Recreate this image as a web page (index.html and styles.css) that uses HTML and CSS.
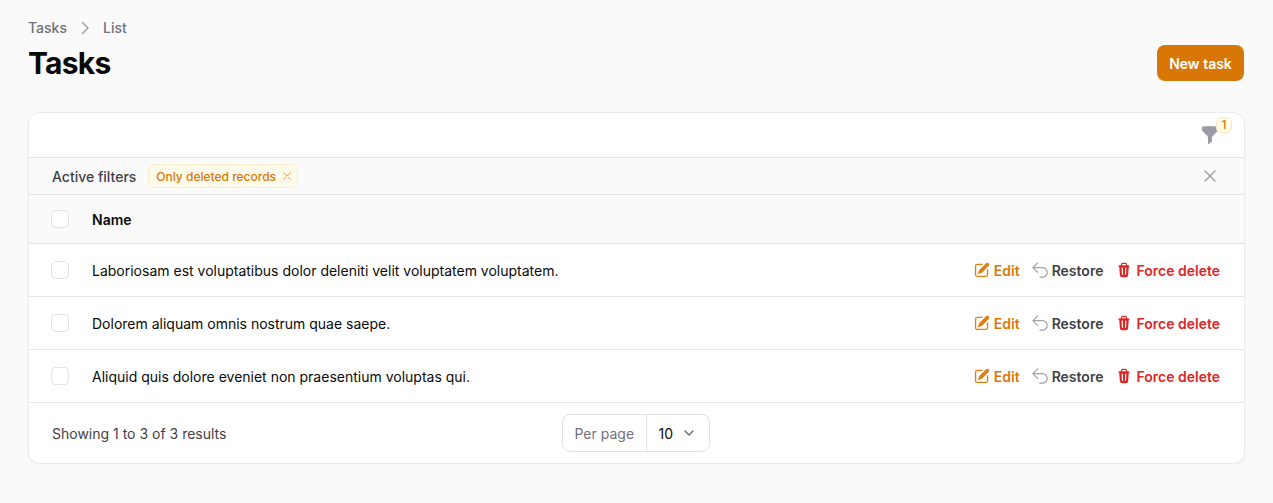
FILE: index.html
```html
<!DOCTYPE html>
<html lang="en">
<head>
<meta charset="utf-8">
<title>Tasks</title>
<link rel="stylesheet" href="styles.css">
</head>
<body>
<main class="page">
  <header class="page-head">
    <div>
      <nav class="crumbs">
        <span>Tasks</span>
        <svg class="crumb-sep" viewBox="0 0 20 20" fill="none" stroke="currentColor" stroke-width="1.5" stroke-linecap="round" stroke-linejoin="round"><path d="M7.5 4.5 13 10l-5.5 5.5"/></svg>
        <span>List</span>
      </nav>
      <h1 class="title">Tasks</h1>
    </div>
    <button class="new-btn">New task</button>
  </header>

  <section class="card">
    <div class="toolbar">
      <div class="filter-trigger">
        <svg class="funnel" viewBox="0 0 20 20" fill="currentColor"><path d="M2.628 1.601C5.028 1.206 7.49 1 10 1s4.973.206 7.372.601a.75.75 0 01.628.74v2.288a2.25 2.25 0 01-.659 1.59l-4.682 4.683a2.25 2.25 0 00-.659 1.59v3.037c0 .684-.31 1.33-.844 1.757l-1.937 1.55A.75.75 0 018 18.25v-5.757a2.25 2.25 0 00-.659-1.591L2.659 6.22A2.25 2.25 0 012 4.629V2.34a.75.75 0 01.628-.74z"/></svg>
        <span class="count">1</span>
      </div>
    </div>
    <div class="filters">
      <span class="filters-label">Active filters</span>
      <span class="chip">Only deleted records
        <svg class="chip-x" viewBox="0 0 20 20" fill="none" stroke="currentColor" stroke-width="1.5" stroke-linecap="round"><path d="M5 5l10 10M15 5 5 15"/></svg>
      </span>
      <svg class="clear-x" viewBox="0 0 20 20" fill="none" stroke="currentColor" stroke-width="1.5" stroke-linecap="round"><path d="M5 5l10 10M15 5 5 15"/></svg>
    </div>
    <div class="row head-row">
      <span class="check"></span>
      <span class="name-head">Name</span>
    </div>
    <div class="row">
      <span class="check"></span>
      <span class="name">Laboriosam est voluptatibus dolor deleniti velit voluptatem voluptatem.</span>
      <div class="actions">
        <span class="action edit"><svg viewBox="1 1 18 18" fill="currentColor"><path d="M5.433 13.917l1.262-3.155A4 4 0 017.58 9.42l6.92-6.918a2.121 2.121 0 013 3l-6.92 6.918c-.383.383-.84.685-1.343.886l-3.154 1.262a.5.5 0 01-.65-.65z"/><path d="M3.5 5.75c0-.69.56-1.25 1.25-1.25H10A.75.75 0 0010 3H4.75A2.75 2.75 0 002 5.75v9.5A2.75 2.75 0 004.75 18h9.5A2.75 2.75 0 0017 15.25V10a.75.75 0 00-1.5 0v5.25c0 .69-.56 1.25-1.25 1.25h-9.5c-.69 0-1.25-.56-1.25-1.25v-9.5z"/></svg>Edit</span>
        <span class="action restore"><svg class="undo" viewBox="2 2 20 20" fill="none" stroke="currentColor" stroke-width="1.5" stroke-linecap="round" stroke-linejoin="round"><path d="M9 15 3 9m0 0 6-6M3 9h12a6 6 0 0 1 0 12h-3"/></svg>Restore</span>
        <span class="action danger"><svg viewBox="0 0 20 20" fill="currentColor"><path fill-rule="evenodd" d="M8.75 1A2.75 2.75 0 006 3.75v.443c-.795.077-1.584.176-2.365.298a.75.75 0 10.23 1.482l.149-.022.841 10.518A2.75 2.75 0 007.596 19h4.807a2.75 2.75 0 002.742-2.53l.841-10.52.149.023a.75.75 0 00.23-1.482A41.03 41.03 0 0014 4.193V3.75A2.75 2.75 0 0011.25 1h-2.5zM10 4c.84 0 1.673.025 2.5.075V3.75c0-.69-.56-1.25-1.25-1.25h-2.5c-.69 0-1.25.56-1.25 1.25v.325C8.327 4.025 9.16 4 10 4zM8.58 7.72a.75.75 0 00-1.5.06l.3 7.5a.75.75 0 101.5-.06l-.3-7.5zm4.34.06a.75.75 0 10-1.5-.06l-.3 7.5a.75.75 0 101.5.06l.3-7.5z" clip-rule="evenodd"/></svg>Force delete</span>
      </div>
    </div>
    <div class="row">
      <span class="check"></span>
      <span class="name">Dolorem aliquam omnis nostrum quae saepe.</span>
      <div class="actions">
        <span class="action edit"><svg viewBox="1 1 18 18" fill="currentColor"><path d="M5.433 13.917l1.262-3.155A4 4 0 017.58 9.42l6.92-6.918a2.121 2.121 0 013 3l-6.92 6.918c-.383.383-.84.685-1.343.886l-3.154 1.262a.5.5 0 01-.65-.65z"/><path d="M3.5 5.75c0-.69.56-1.25 1.25-1.25H10A.75.75 0 0010 3H4.75A2.75 2.75 0 002 5.75v9.5A2.75 2.75 0 004.75 18h9.5A2.75 2.75 0 0017 15.25V10a.75.75 0 00-1.5 0v5.25c0 .69-.56 1.25-1.25 1.25h-9.5c-.69 0-1.25-.56-1.25-1.25v-9.5z"/></svg>Edit</span>
        <span class="action restore"><svg class="undo" viewBox="2 2 20 20" fill="none" stroke="currentColor" stroke-width="1.5" stroke-linecap="round" stroke-linejoin="round"><path d="M9 15 3 9m0 0 6-6M3 9h12a6 6 0 0 1 0 12h-3"/></svg>Restore</span>
        <span class="action danger"><svg viewBox="0 0 20 20" fill="currentColor"><path fill-rule="evenodd" d="M8.75 1A2.75 2.75 0 006 3.75v.443c-.795.077-1.584.176-2.365.298a.75.75 0 10.23 1.482l.149-.022.841 10.518A2.75 2.75 0 007.596 19h4.807a2.75 2.75 0 002.742-2.53l.841-10.52.149.023a.75.75 0 00.23-1.482A41.03 41.03 0 0014 4.193V3.75A2.75 2.75 0 0011.25 1h-2.5zM10 4c.84 0 1.673.025 2.5.075V3.75c0-.69-.56-1.25-1.25-1.25h-2.5c-.69 0-1.25.56-1.25 1.25v.325C8.327 4.025 9.16 4 10 4zM8.58 7.72a.75.75 0 00-1.5.06l.3 7.5a.75.75 0 101.5-.06l-.3-7.5zm4.34.06a.75.75 0 10-1.5-.06l-.3 7.5a.75.75 0 101.5.06l.3-7.5z" clip-rule="evenodd"/></svg>Force delete</span>
      </div>
    </div>
    <div class="row">
      <span class="check"></span>
      <span class="name">Aliquid quis dolore eveniet non praesentium voluptas qui.</span>
      <div class="actions">
        <span class="action edit"><svg viewBox="1 1 18 18" fill="currentColor"><path d="M5.433 13.917l1.262-3.155A4 4 0 017.58 9.42l6.92-6.918a2.121 2.121 0 013 3l-6.92 6.918c-.383.383-.84.685-1.343.886l-3.154 1.262a.5.5 0 01-.65-.65z"/><path d="M3.5 5.75c0-.69.56-1.25 1.25-1.25H10A.75.75 0 0010 3H4.75A2.75 2.75 0 002 5.75v9.5A2.75 2.75 0 004.75 18h9.5A2.75 2.75 0 0017 15.25V10a.75.75 0 00-1.5 0v5.25c0 .69-.56 1.25-1.25 1.25h-9.5c-.69 0-1.25-.56-1.25-1.25v-9.5z"/></svg>Edit</span>
        <span class="action restore"><svg class="undo" viewBox="2 2 20 20" fill="none" stroke="currentColor" stroke-width="1.5" stroke-linecap="round" stroke-linejoin="round"><path d="M9 15 3 9m0 0 6-6M3 9h12a6 6 0 0 1 0 12h-3"/></svg>Restore</span>
        <span class="action danger"><svg viewBox="0 0 20 20" fill="currentColor"><path fill-rule="evenodd" d="M8.75 1A2.75 2.75 0 006 3.75v.443c-.795.077-1.584.176-2.365.298a.75.75 0 10.23 1.482l.149-.022.841 10.518A2.75 2.75 0 007.596 19h4.807a2.75 2.75 0 002.742-2.53l.841-10.52.149.023a.75.75 0 00.23-1.482A41.03 41.03 0 0014 4.193V3.75A2.75 2.75 0 0011.25 1h-2.5zM10 4c.84 0 1.673.025 2.5.075V3.75c0-.69-.56-1.25-1.25-1.25h-2.5c-.69 0-1.25.56-1.25 1.25v.325C8.327 4.025 9.16 4 10 4zM8.58 7.72a.75.75 0 00-1.5.06l.3 7.5a.75.75 0 101.5-.06l-.3-7.5zm4.34.06a.75.75 0 10-1.5-.06l-.3 7.5a.75.75 0 101.5.06l.3-7.5z" clip-rule="evenodd"/></svg>Force delete</span>
      </div>
    </div>
    <footer class="foot">
      <span class="results">Showing 1 to 3 of 3 results</span>
      <div class="per-page">
        <span class="per-label">Per page</span>
        <span class="per-value">10
          <svg class="chev" viewBox="0 0 20 20" fill="none" stroke="currentColor" stroke-width="1.5" stroke-linecap="round" stroke-linejoin="round"><path d="M6 8l4 4 4-4"/></svg>
        </span>
      </div>
      <span class="foot-spacer"></span>
    </footer>
  </section>
</main>
</body>
</html>
```
FILE: styles.css
```css
* { box-sizing: border-box; }
html, body { margin: 0; }
body {
  background: #fafafa;
  font-family: Inter, "Liberation Sans", sans-serif;
  font-size: 14px;
  line-height: 20px;
  color: #0a0a0a;
}
.page { padding: 18px 28px 0; }
.page-head {
  display: flex;
  justify-content: space-between;
  align-items: flex-end;
  margin-bottom: 31px;
}
.crumbs {
  display: flex;
  align-items: center;
  gap: 8px;
  color: #71717a;
  font-weight: 500;
  margin-bottom: 7px;
}
.crumb-sep { width: 20px; height: 20px; color: #a1a1aa; }
.title {
  margin: 0;
  font-size: 30px;
  line-height: 36px;
  font-weight: 700;
  letter-spacing: -0.75px;
  color: #0a0a0a;
}
.new-btn {
  width: 87px;
  height: 36px;
  margin-right: 1px;
  padding: 2px 0 0;
  border: 0;
  border-radius: 8px;
  background: #d97706;
  color: #fff;
  font: 600 14px/20px Inter, "Liberation Sans", sans-serif;
}
.card {
  background: #fff;
  border: 1px solid #ececed;
  border-radius: 12px;
  overflow: hidden;
  box-shadow: 0 1px 2px rgba(0, 0, 0, 0.05);
}
.toolbar {
  display: flex;
  justify-content: flex-end;
  height: 45px;
  padding: 12px 24px 0 0;
  border-bottom: 1px solid #e4e4e7;
}
.filter-trigger { position: relative; width: 20px; height: 20px; }
.funnel { display: block; width: 20px; height: 20px; color: #9b9ba5; }
.count {
  position: absolute;
  top: -8px;
  right: -12px;
  width: 16px;
  height: 16px;
  border: 1px solid #fde9c0;
  border-radius: 5px;
  background: #fffbeb;
  color: #d97706;
  font-size: 12px;
  font-weight: 500;
  line-height: 14px;
  text-align: center;
}
.filters {
  display: flex;
  align-items: center;
  height: 37px;
  padding: 0 24px 0 23px;
  background: #fafafa;
  border-bottom: 1px solid #e4e4e7;
}
.filters-label { padding-top: 2px; font-weight: 500; color: #3f3f46; margin-right: 12px; }
.chip {
  display: flex;
  align-items: center;
  gap: 4px;
  height: 24px;
  padding: 1px 3px 0 7px;
  border: 1px solid #fdeccb;
  border-radius: 6px;
  background: #fffbeb;
  color: #d97706;
  font-size: 12px;
  font-weight: 500;
}
.chip-x { width: 14px; height: 14px; margin-top: -1px; color: #eaa45a; }
.clear-x { width: 20px; height: 20px; margin-left: auto; color: #a1a1aa; }
.row {
  display: flex;
  align-items: center;
  height: 53px;
  padding: 0 24px 0 22px;
  border-bottom: 1px solid #e4e4e7;
}
.head-row { height: 49px; background: #fafafa; }
.check {
  flex: none;
  width: 18px;
  height: 18px;
  margin-right: 23px;
  border: 1px solid #e1e1e4;
  border-radius: 5px;
  background: #fff;
}
.name-head { padding-top: 2px; font-weight: 600; color: #0a0a0a; }
.name { padding-top: 2px; color: #0a0a0a; }
.actions { display: flex; align-items: center; gap: 12px; margin-left: auto; }
.action { display: flex; align-items: center; gap: 4px; padding-top: 2px; font-weight: 600; }
.action svg { width: 16px; height: 16px; flex: none; margin-top: -2px; }
.edit { color: #d97706; }
.edit svg { color: #df7f10; }
.restore { color: #3f3f46; }
.restore .undo { color: #a1a1aa; }
.danger { margin-left: 1px; color: #dc2626; }
.foot {
  display: grid;
  grid-template-columns: 1fr auto 1fr;
  align-items: center;
  height: 60px;
  padding: 0 25px 0 23px;
}
.results { padding-top: 2px; color: #3f3f46; }
.per-page {
  display: flex;
  align-items: stretch;
  width: 148px;
  height: 38px;
  border: 1px solid #e1e1e4;
  border-radius: 8px;
  background: #fff;
}
.per-label {
  display: flex;
  align-items: center;
  flex: none;
  padding: 1px 12px 0;
  width: 84px;
  white-space: nowrap;
  border-right: 1px solid #e1e1e4;
  color: #71717a;
}
.per-value { display: flex; align-items: center; gap: 6px; padding: 1px 0 0 12px; color: #0a0a0a; }
.chev { width: 20px; height: 20px; margin-top: -1px; color: #71717a; }
```
